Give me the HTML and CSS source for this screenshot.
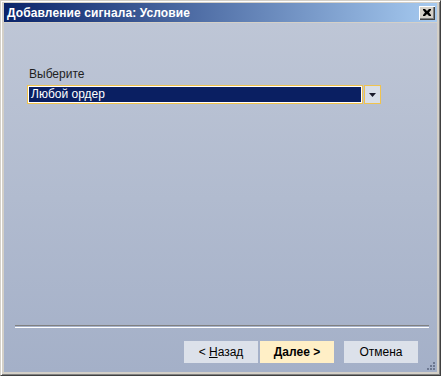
FILE: index.html
```html
<!DOCTYPE html>
<html lang="ru">
<head>
  <meta charset="UTF-8">
  <title>Добавление сигнала: Условие</title>
  <link rel="stylesheet" href="styles.css">
</head>
<body>
  <div class="window">
    <div class="titlebar">
      <span class="title">Добавление сигнала: Условие</span>
      <button class="close-btn">
        <svg viewBox="0 0 8 7" width="8" height="7">
          <path d="M0 0h2l2 2 2-2h2v1L6 3.5 8 6v1H6L4 5 2 7H0V6l2-2.5L0 1z" fill="#000"/>
        </svg>
      </button>
    </div>
    <div class="client">
      <div class="content">
        <div class="label">Выберите</div>
        <div class="combo">
          <div class="combo-field">Любой ордер</div>
          <div class="combo-btn">
            <svg viewBox="0 0 7 4" width="7" height="4"><path d="M0 0h7L3.5 4z" fill="#1a1a2a"/></svg>
          </div>
        </div>
      </div>
      <div class="separator"></div>
      <div class="footer">
        <button class="btn">&lt; <u>Н</u>азад</button>
        <button class="btn btn-primary"><u>Д</u>алее &gt;</button>
        <button class="btn btn-cancel">Отмена</button>
      </div>
      <!-- уголок для изменения размера -->
      <svg class="grip" viewBox="0 0 10 10" width="10" height="10">
        <rect x="7" y="1" width="2" height="2" fill="#6d7891"/>
        <rect x="4" y="4" width="2" height="2" fill="#6d7891"/>
        <rect x="7" y="4" width="2" height="2" fill="#6d7891"/>
        <rect x="1" y="7" width="2" height="2" fill="#6d7891"/>
        <rect x="4" y="7" width="2" height="2" fill="#6d7891"/>
        <rect x="7" y="7" width="2" height="2" fill="#6d7891"/>
      </svg>
    </div>
  </div>
</body>
</html>
```

FILE: styles.css
```css
body {
  margin: 0;
  padding: 0;
  font-family: "Liberation Sans", Arial, sans-serif;
  background: #D4D0C8;
}
.window {
  width: 441px;
  height: 376px;
  box-sizing: border-box;
  display: flex;
  flex-direction: column;
  background: #D4D0C8;
  border: 1px solid;
  border-color: #D4D0C8 #404040 #404040 #D4D0C8;
  box-shadow: inset 1px 1px 0 #fff, inset -1px -1px 0 #808080;
  padding: 2px 3px 3px 3px;
}
.titlebar {
  height: 19px;
  display: flex;
  align-items: center;
  justify-content: space-between;
  padding: 0 2px 0 3px;
  background: linear-gradient(to right, #0A246A, #A6CAF0);
  margin-bottom: 1px;
}
.title {
  color: #fff;
  font-weight: bold;
  font-size: 12px;
  letter-spacing: 0.1px;
}
.close-btn {
  width: 16px;
  height: 14px;
  padding: 0;
  display: flex;
  align-items: center;
  justify-content: center;
  background: #D4D0C8;
  border: none;
  box-shadow: inset 1px 1px 0 #fff, inset -1px -1px 0 #404040, inset -2px -2px 0 #808080;
}
.client {
  flex: 1;
  position: relative;
  display: flex;
  flex-direction: column;
  background: linear-gradient(to bottom, #BEC6D6, #A4B0C8);
}
.content {
  flex: 1;
  padding: 44px 0 0 23px;
}
.label {
  font-size: 12px;
  line-height: 14px;
  color: #1e1e1e;
  padding-left: 2px;
  margin-bottom: 4px;
}
.combo {
  display: flex;
  gap: 1px;
  width: 354px;
  height: 19px;
}
.combo-field {
  flex: 1;
  box-sizing: border-box;
  border: 1px solid #F0C34E;
  box-shadow: inset 0 0 0 1px #fff;
  background: #0A1F62;
  color: #fff;
  font-size: 12px;
  line-height: 17px;
  padding-left: 3px;
}
.combo-btn {
  width: 17px;
  box-sizing: border-box;
  border: 1px solid #F0C34E;
  background: #D8DEE8;
  display: flex;
  align-items: center;
  justify-content: center;
}
.separator {
  margin: 0 8px 0 11px;
  height: 1px;
  border-top: 1px solid #808080;
  border-bottom: 1px solid #fff;
}
.footer {
  display: flex;
  justify-content: flex-end;
  padding: 13px 19px 9px 0;
}
.btn {
  width: 74px;
  height: 22px;
  border: none;
  padding: 0;
  background: #DCE1EA;
  font-family: "Liberation Sans", Arial, sans-serif;
  font-size: 12px;
  color: #000;
  margin-left: 2px;
}
.btn-primary {
  background: #FFEFC6;
  font-weight: bold;
}
.btn-cancel {
  margin-left: 10px;
}
.grip {
  position: absolute;
  right: 1px;
  bottom: 1px;
}
```
